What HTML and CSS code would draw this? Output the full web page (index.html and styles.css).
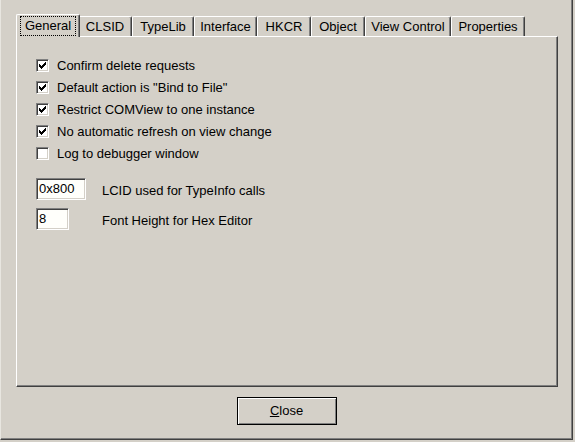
FILE: index.html
```html
<!DOCTYPE html>
<html>
<head>
<meta charset="utf-8">
<link rel="stylesheet" href="styles.css">
</head>
<body>
<div class="window">
  <div class="tabstrip">
    <div class="tab selected w-general"><span class="focus">General</span></div>
    <div class="tab w-clsid">CLSID</div>
    <div class="tab w-typelib">TypeLib</div>
    <div class="tab w-interface">Interface</div>
    <div class="tab w-hkcr">HKCR</div>
    <div class="tab w-object">Object</div>
    <div class="tab w-view">View Control</div>
    <div class="tab w-props">Properties</div>
  </div>
  <div class="panel">
    <div class="checkrow"><span class="check"><svg class="mark" width="9" height="9" viewBox="0 0 9 9"><path d="M7 1h1v1h-1z M6 2h2v1h-2z M1 3h1v1h-1z M5 3h3v1h-3z M1 4h2v1h-2z M4 4h3v1h-3z M1 5h5v1h-5z M2 6h3v1h-3z M3 7h1v1h-1z" fill="#000"/></svg></span><span class="label">Confirm delete requests</span></div>
    <div class="checkrow"><span class="check"><svg class="mark" width="9" height="9" viewBox="0 0 9 9"><path d="M7 1h1v1h-1z M6 2h2v1h-2z M1 3h1v1h-1z M5 3h3v1h-3z M1 4h2v1h-2z M4 4h3v1h-3z M1 5h5v1h-5z M2 6h3v1h-3z M3 7h1v1h-1z" fill="#000"/></svg></span><span class="label">Default action is "Bind to File"</span></div>
    <div class="checkrow"><span class="check"><svg class="mark" width="9" height="9" viewBox="0 0 9 9"><path d="M7 1h1v1h-1z M6 2h2v1h-2z M1 3h1v1h-1z M5 3h3v1h-3z M1 4h2v1h-2z M4 4h3v1h-3z M1 5h5v1h-5z M2 6h3v1h-3z M3 7h1v1h-1z" fill="#000"/></svg></span><span class="label">Restrict COMView to one instance</span></div>
    <div class="checkrow"><span class="check"><svg class="mark" width="9" height="9" viewBox="0 0 9 9"><path d="M7 1h1v1h-1z M6 2h2v1h-2z M1 3h1v1h-1z M5 3h3v1h-3z M1 4h2v1h-2z M4 4h3v1h-3z M1 5h5v1h-5z M2 6h3v1h-3z M3 7h1v1h-1z" fill="#000"/></svg></span><span class="label">No automatic refresh on view change</span></div>
    <div class="checkrow"><span class="check"></span><span class="label">Log to debugger window</span></div>

    <div class="editrow first"><span class="editcol"><span class="edit w50">0x800</span></span><span class="label elabel">LCID used for TypeInfo calls</span></div>
    <div class="editrow"><span class="editcol"><span class="edit w33">8</span></span><span class="label elabel">Font Height for Hex Editor</span></div>
  </div>
  <div class="buttons">
    <div class="button"><span class="ul">C</span>lose</div>
  </div>
</div>
</body>
</html>
```
FILE: styles.css
```css
html, body {
  margin: 0;
  padding: 0;
  background: #d4d0c8;
}
body {
  width: 575px;
  height: 442px;
  overflow: hidden;
  font-family: "Liberation Sans", Arial, sans-serif;
  font-size: 13px;
  color: #000;
}
.window {
  box-sizing: border-box;
  width: 573px;
  height: 440px;
  border-left: 1px solid #e8e6e0;
  border-right: 1px solid #404040;
  border-bottom: 1px solid #404040;
  box-shadow: inset -1px -1px 0 #808080;
  padding: 14px 0 0 15px;
}
.tabstrip {
  display: flex;
  align-items: flex-end;
  height: 22px;
  padding-left: 2px;
}
.tab {
  box-sizing: border-box;
  height: 20px;
  line-height: 18px;
  padding-top: 1px;
  text-align: center;
  white-space: nowrap;
  border-left: 1px solid #fff;
  border-top: 1px solid #fff;
  border-right: 1px solid #404040;
  border-radius: 2px 2px 0 0;
  box-shadow: inset -1px 0 0 #808080;
  background: #d4d0c8;
}
.tab.selected {
  position: relative;
  z-index: 1;
  height: 23px;
  margin: 0 -2px -1px -2px;
  padding-top: 1px;
  line-height: 20px;
}
.focus {
  display: inline-block;
  box-sizing: border-box;
  height: 20px;
  line-height: 18px;
  padding: 0 4px;
  border: 1px dotted #000;
  vertical-align: top;
}
.w-general { width: 64px; }
.w-clsid { width: 54px; }
.w-typelib { width: 62px; }
.w-interface { width: 63px; }
.w-hkcr { width: 54px; }
.w-object { width: 54px; }
.w-view { width: 86px; }
.w-props { width: 74px; }

.panel {
  box-sizing: border-box;
  width: 542px;
  height: 351px;
  border-top: 1px solid #fff;
  border-left: 1px solid #fff;
  border-right: 1px solid #404040;
  border-bottom: 1px solid #404040;
  box-shadow: inset -1px -1px 0 #808080;
  padding: 17px 0 0 19px;
}
.checkrow {
  display: flex;
  align-items: flex-start;
  height: 22px;
  line-height: 22px;
}
.check {
  box-sizing: border-box;
  display: block;
  width: 13px;
  height: 13px;
  margin-top: 5px;
  margin-right: 8px;
  padding: 1px;
  background: #fff;
  border: 1px solid;
  border-color: #808080 #fff #fff #808080;
  box-shadow: inset 1px 1px 0 #404040, inset -1px -1px 0 #d4d0c8;
}
.mark {
  display: block;
}
.label {
  white-space: nowrap;
  padding-top: 1px;
}
.elabel {
  padding-top: 2px;
  padding-left: 1px;
}
.editrow {
  display: flex;
  align-items: flex-start;
  height: 22px;
  line-height: 22px;
  margin-top: 8px;
}
.editrow.first {
  margin-top: 14px;
}
.editcol {
  display: block;
  width: 65px;
}
.edit {
  box-sizing: border-box;
  display: block;
  height: 22px;
  line-height: 19px;
  padding-left: 1px;
  background: #fffffb;
  border: 1px solid;
  border-color: #808080 #fff #fff #808080;
  box-shadow: inset 1px 1px 0 #404040, inset -1px -1px 0 #d4d0c8;
}
.edit.w50 { width: 50px; padding-left: 2px; }
.edit.w33 { width: 33px; padding-left: 2px; }

.buttons {
  display: flex;
  justify-content: center;
  margin-top: 10px;
  padding-right: 15px;
}
.button {
  box-sizing: border-box;
  width: 100px;
  height: 28px;
  line-height: 26px;
  text-align: center;
  border: 1px solid #000;
  box-shadow: inset 1px 1px 0 #fff, inset -1px -1px 0 #808080;
  background: #d4d0c8;
}
.ul {
  text-decoration: underline;
}
```
